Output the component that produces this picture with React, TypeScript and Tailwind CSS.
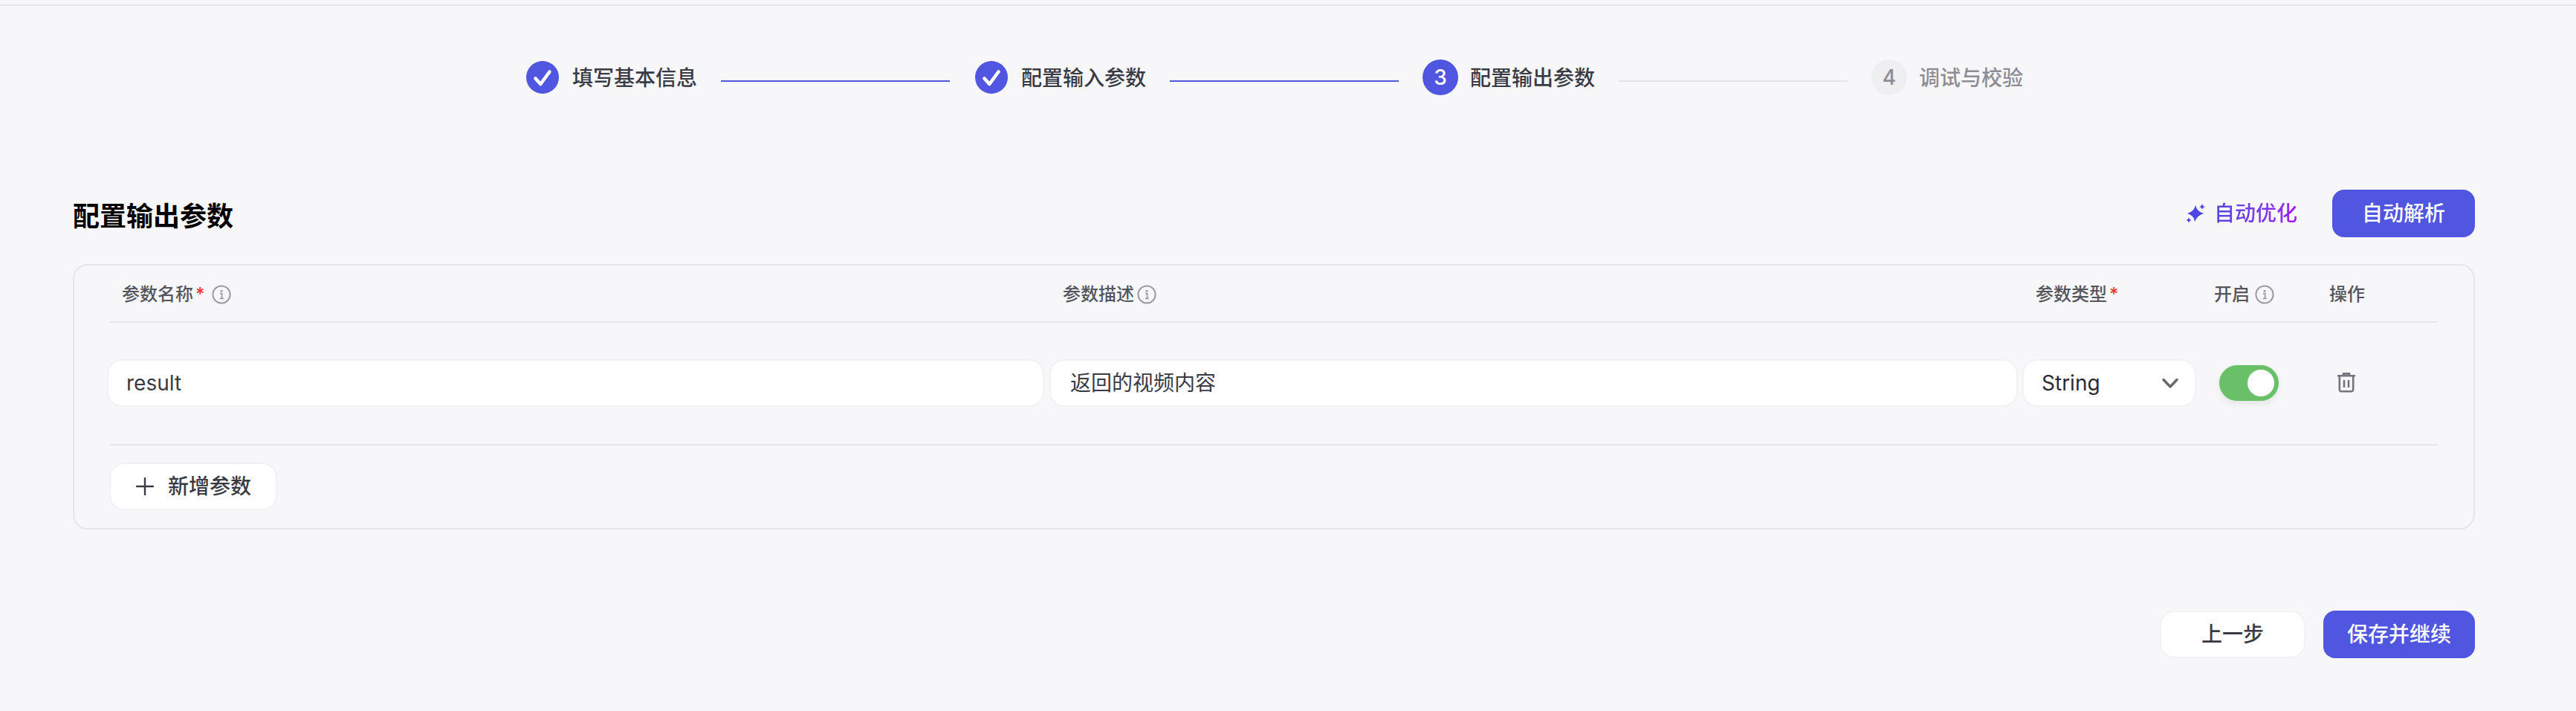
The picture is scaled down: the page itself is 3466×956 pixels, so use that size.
import React from "react";

const FONT = "[font-family:Inter,'Noto_Sans_CJK_SC',sans-serif]";

function Info() {
  return (
    <svg width="26" height="26" viewBox="0 0 26 26" fill="none" className="shrink-0">
      <circle cx="13" cy="13" r="11.6" stroke="#9b9ba0" strokeWidth="2" />
      <circle cx="13" cy="8.2" r="1.5" fill="#9b9ba0" />
      <path d="M11 11.6h2.6v6.4M10.8 18.4h5" stroke="#9b9ba0" strokeWidth="1.8" />
    </svg>
  );
}

function Check() {
  return (
    <span className="flex h-[48px] w-[48px] shrink-0 items-center justify-center">
      <svg width="44" height="44" viewBox="0 0 44 44">
        <circle cx="22" cy="22" r="22" fill="#5056e0" />
        <path d="M12.5 23.5l6.8 7.5L31.5 14.5" fill="none" stroke="#fff" strokeWidth="4.6" strokeLinecap="round" strokeLinejoin="round" />
      </svg>
    </span>
  );
}

function Step({ icon, label, muted }: { icon: React.ReactNode; label: string; muted?: boolean }) {
  return (
    <div className="flex items-center gap-4">
      {icon}
      <span className={`pt-[2px] text-[28px] leading-[40px] font-medium ${muted ? "text-[#8d8d95]" : "text-[#3a3a45]"}`}>{label}</span>
    </div>
  );
}

function Line({ on }: { on?: boolean }) {
  return <div className={`mx-8 mt-[10px] h-[2px] w-[308px] ${on ? "bg-[#5056e0]" : "bg-[#e4e4e7]"}`} />;
}

function Req() {
  return <span className="ml-[3px] text-[24px] leading-[32px] font-medium text-[#f0352b]">*</span>;
}

export default function App() {
  return (
    <div className={`${FONT} h-[956px] w-full overflow-hidden bg-[#f7f7f9] pt-[6px]`}>
      <div className="h-[2px] w-full bg-[#e6e6e9]" />

      <div className="mt-[72px] flex h-[48px] items-center pl-[706px]">
        <Step icon={<Check />} label="填写基本信息" />
        <Line on />
        <Step icon={<Check />} label="配置输入参数" />
        <Line on />
        <Step
          icon={
            <span className="flex h-[48px] w-[48px] items-center justify-center rounded-full bg-[#5056e0] text-[28px] font-medium text-white">3</span>
          }
          label="配置输出参数"
        />
        <Line />
        <Step
          muted
          icon={
            <span className="flex h-[48px] w-[48px] items-center justify-center rounded-full bg-[#efeff1] text-[28px] font-medium text-[#8d8d95]">4</span>
          }
          label="调试与校验"
        />
      </div>

      <div className="ml-[98px] mr-[136px]">
        <div className="mt-[127px] flex h-[64px] items-center justify-between">
          <h1 className="pt-[8px] text-[36px] leading-[48px] font-semibold text-black">配置输出参数</h1>
          <div className="flex items-center">
            <svg width="28" height="28" viewBox="0 0 28 28" className="mr-[11px]">
              <path d="M14 3Q16 11.5 25 14Q16.5 16.5 13 25Q12 16.5 3 14Q12 11.5 14 3Z" fill="#4f46e5" />
              <path d="M23 1.2Q23.8 4.2 26.8 5Q23.8 5.8 23 8.8Q22.2 5.8 19.2 5Q22.2 4.2 23 1.2Z" fill="#4f46e5" />
              <path d="M5 19.5Q5.8 22.2 8.5 23Q5.8 23.8 5 26.5Q4.2 23.8 1.5 23Q4.2 22.2 5 19.5Z" fill="#4f46e5" />
            </svg>
            <span className="bg-gradient-to-r from-[#4f46e5] to-[#9f1cf0] bg-clip-text text-[28px] leading-[40px] font-medium text-transparent">自动优化</span>
            <button className="ml-[47px] h-[64px] w-[192px] rounded-[16px] bg-[#5056e0] text-[28px] font-medium text-white">自动解析</button>
          </div>
        </div>

        <div className="mt-[36px] h-[357px] rounded-[20px] border-2 border-[#e7e7ea]">
          <div className="mx-[48px] flex h-[77px] items-center border-b-2 border-[#e7e7ea] pt-[2px] text-[24px] leading-[32px] font-medium text-[#55555c]">
            <div className="flex w-[1282px] items-center pl-[16px]">
              <span>参数名称</span>
              <Req />
              <span className="ml-[9px] flex"><Info /></span>
            </div>
            <div className="flex w-[1309px] items-center">
              <span>参数描述</span>
              <span className="ml-[4px] flex"><Info /></span>
            </div>
            <div className="flex w-[240px] items-center">
              <span>参数类型</span>
              <Req />
            </div>
            <div className="flex w-[155px] items-center">
              <span>开启</span>
              <span className="ml-[7px] flex"><Info /></span>
            </div>
            <span>操作</span>
          </div>

          <div className="ml-[44px] mt-[49px] flex h-[64px] items-center text-[28px] text-[#3a3a45]">
            <div className="flex h-[64px] w-[1261px] items-center rounded-[20px] border-2 border-[#f2f2f4] bg-white pl-[24px]">result</div>
            <div className="ml-[7px] flex h-[64px] w-[1303px] items-center rounded-[20px] border-2 border-[#f2f2f4] bg-white pl-[26px]">返回的视频内容</div>
            <div className="ml-[6px] flex h-[64px] w-[234px] items-center justify-between rounded-[20px] border-2 border-[#f2f2f4] bg-white pl-[24px] pr-[21px] text-[#2c2c34]">
              <span>String</span>
              <svg width="24" height="24" viewBox="0 0 24 24" fill="none">
                <path d="M3 7.5l9 9.5 9-9.5" stroke="#68686e" strokeWidth="3.4" strokeLinecap="round" strokeLinejoin="round" />
              </svg>
            </div>
            <div className="relative ml-[31px] h-[48px] w-[80px] rounded-full bg-[#6abf69] shadow-[0_4px_10px_rgba(0,0,0,0.08)]">
              <span className="absolute left-[38px] top-[6px] h-[36px] w-[36px] rounded-full bg-white" />
            </div>
            <svg width="32" height="32" viewBox="0 0 32 32" fill="none" className="ml-[75px]">
              <path d="M4 6.2h24M12 6V3.4h8V6M6.8 6.2v18.6a2.4 2.4 0 0 0 2.4 2.4h13.6a2.4 2.4 0 0 0 2.4-2.4V6.2M13 12v10M19 12v10" stroke="#75757b" strokeWidth="2.6" strokeLinejoin="round" />
            </svg>
          </div>

          <div className="mx-[48px] mt-[50px] h-[2px] bg-[#e7e7ea]" />

          <button className="ml-[47px] mt-[23px] flex h-[64px] w-[226px] items-center rounded-[20px] border-2 border-[#f2f2f4] bg-white pl-[34px] text-[28px] font-medium text-[#3a3a45]">
            <svg width="24" height="24" viewBox="0 0 24 24" fill="none">
              <path d="M12 1v22M1 12h22" stroke="#3a3a45" strokeWidth="2.4" strokeLinecap="round" />
            </svg>
            <span className="ml-[19px]">新增参数</span>
          </button>
        </div>

        <div className="mt-[109px] flex items-center justify-end">
          <button className="h-[64px] w-[196px] rounded-[20px] border-2 border-[#f2f2f4] bg-white text-[28px] font-medium text-[#3a3a45]">上一步</button>
          <button className="ml-[24px] h-[64px] w-[204px] rounded-[16px] bg-[#5056e0] text-[28px] font-medium text-white">保存并继续</button>
        </div>
      </div>
    </div>
  );
}
